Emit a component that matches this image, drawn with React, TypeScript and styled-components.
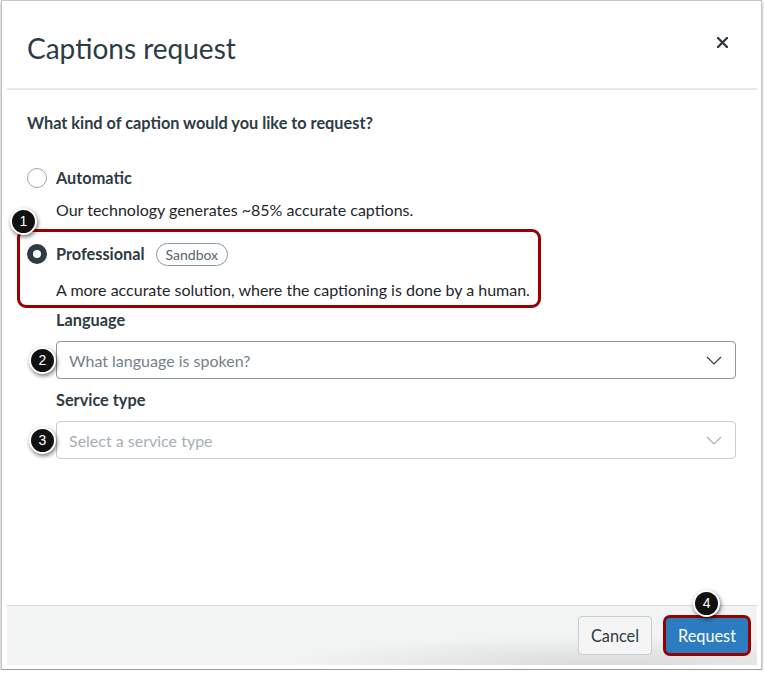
import styled, { createGlobalStyle } from "styled-components";

const GlobalStyle = createGlobalStyle`
  html, body {
    margin: 0;
    padding: 0;
    background: #ffffff;
  }
  body {
    font-family: Lato, "Liberation Sans", sans-serif;
    color: #2d3b45;
  }
`;

const Frame = styled.div`
  box-sizing: border-box;
  width: 761px;
  height: 670px;
  margin-left: 1px;
  border: 1px solid #c4c4c4;
  border-bottom-color: #9a9a9a;
  box-shadow: 0 2px 3px rgba(0, 0, 0, 0.35);
  padding: 0 4px 4px 5px;
  display: flex;
`;

const Dialog = styled.div`
  flex: 1;
  display: flex;
  flex-direction: column;
  background: #ffffff;
`;

const Header = styled.header`
  height: 87px;
  border-bottom: 2px solid #e6e8ea;
  display: flex;
  align-items: center;
  justify-content: space-between;
  padding: 0 28px 0 20px;
  flex-shrink: 0;
`;

const Title = styled.h1`
  margin: 7px 0 0;
  font-size: 28px;
  font-weight: 400;
  line-height: 32px;
  color: #2d3b45;
`;

const CloseButton = styled.button`
  border: none;
  background: none;
  padding: 0;
  margin-bottom: 4px;
  width: 14px;
  height: 14px;
  display: flex;
  align-items: center;
  justify-content: center;
  cursor: pointer;
`;

const Body = styled.main`
  flex: 1;
  display: flex;
  flex-direction: column;
  align-items: flex-start;
  padding: 21px 21px 0 20px;
  font-size: 16px;
`;

const Question = styled.div`
  font-size: 16.3px;
  font-weight: 700;
  line-height: 24px;
  margin-bottom: 31px;
`;

const Option = styled.div`
  display: flex;
  flex-direction: column;
`;

const OptionRow = styled.label`
  display: flex;
  align-items: center;
  height: 24px;
  font-size: 16.3px;
  font-weight: 700;
  line-height: 24px;
`;

const Radio = styled.span<{ $checked?: boolean }>`
  box-sizing: border-box;
  width: 20px;
  height: 20px;
  border-radius: 50%;
  margin-right: 9px;
  background: #ffffff;
  border: ${({ $checked }) =>
    $checked ? "6px solid #2d3b45" : "1px solid #9ea6ad"};
`;

const Description = styled.div<{ $gap: number }>`
  margin: ${({ $gap }) => $gap}px 0 0 29px;
  line-height: 24px;
  white-space: nowrap;
  color: #1f262b;
`;

const Highlight = styled.div`
  position: relative;
  box-sizing: border-box;
  width: 524px;
  margin: 7px 0 0 -10px;
  padding: 10px 9px 3px 7px;
  border: 3px solid #990000;
  border-radius: 9px;
`;

const Pill = styled.span`
  box-sizing: border-box;
  height: 23px;
  margin-left: 11px;
  padding: 0 9px;
  border: 1px solid #8b969e;
  border-radius: 12px;
  font-size: 14px;
  font-weight: 400;
  line-height: 21px;
  color: #556572;
`;

const Step = styled.span`
  position: absolute;
  box-sizing: border-box;
  width: 27px;
  height: 27px;
  border-radius: 50%;
  background: #111111;
  border: 2px solid #ffffff;
  box-shadow: 1px 2px 4px rgba(0, 0, 0, 0.55);
  color: #ffffff;
  font-family: "Liberation Sans", Arial, sans-serif;
  font-size: 14px;
  font-weight: 400;
  line-height: 23px;
  text-align: center;
  z-index: 2;
`;

const FirstStep = styled(Step)`
  left: -10px;
  top: -24px;
`;

const FieldStep = styled(Step)`
  left: -28px;
  top: 5px;
`;

const FieldLabel = styled.div<{ $gap: number }>`
  margin: ${({ $gap }) => $gap}px 0 0 29px;
  font-size: 16.3px;
  font-weight: 700;
  line-height: 24px;
`;

const Select = styled.div<{ $disabled?: boolean }>`
  position: relative;
  box-sizing: border-box;
  align-self: stretch;
  height: 38px;
  margin: 9px 0 0 29px;
  padding: 0 13px 0 12px;
  border: 1px solid ${({ $disabled }) => ($disabled ? "#c7cdd1" : "#8b969e")};
  border-radius: 4px;
  display: flex;
  align-items: center;
  justify-content: space-between;
  color: ${({ $disabled }) => ($disabled ? "#a5afb5" : "#73818c")};
`;

const Footer = styled.footer`
  box-sizing: border-box;
  height: 60px;
  flex-shrink: 0;
  border-top: 1px solid #d7dbde;
  background: radial-gradient(
      ellipse 320px 30px at 80% 100%,
      rgba(0, 0, 0, 0.1),
      rgba(0, 0, 0, 0) 100%
    ),
    #f2f3f3;
  display: flex;
  align-items: center;
  justify-content: flex-end;
  gap: 11px;
  padding: 0 6px 0 0;
`;

const CancelButton = styled.button`
  box-sizing: border-box;
  height: 39px;
  padding: 0 12px;
  border: 1px solid #c7cdd1;
  border-radius: 4px;
  background: #f5f5f5;
  font-family: Lato, "Liberation Sans", sans-serif;
  font-size: 16.3px;
  color: #2d3b45;
`;

const RequestWrap = styled.div`
  position: relative;
  display: flex;
`;

const RequestButton = styled.button`
  box-sizing: border-box;
  height: 41px;
  padding: 0 12px;
  border: 3px solid #990000;
  border-radius: 7px;
  background: #2c7cc0;
  font-family: Lato, "Liberation Sans", sans-serif;
  font-size: 16.3px;
  color: #ffffff;
`;

const RequestStep = styled(Step)`
  left: 30px;
  top: -25px;
`;

const Chevron = ({ color }: { color: string }) => (
  <svg width="16" height="9" viewBox="0 0 16 9" fill="none">
    <path d="M1 1l7 7 7-7" stroke={color} strokeWidth="1.2" />
  </svg>
);

export default function App() {
  return (
    <>
      <GlobalStyle />
      <Frame>
        <Dialog>
          <Header>
            <Title>Captions request</Title>
            <CloseButton aria-label="Close">
              <svg width="11" height="11" viewBox="0 0 11 11">
                <path
                  d="M1 1l9 9M10 1l-9 9"
                  stroke="#2d3b45"
                  strokeWidth="2.4"
                  strokeLinecap="round"
                />
              </svg>
            </CloseButton>
          </Header>

          <Body>
            <Question>What kind of caption would you like to request?</Question>

            <Option>
              <OptionRow>
                <Radio />
                Automatic
              </OptionRow>
              <Description $gap={8}>
                Our technology generates ~85% accurate captions.
              </Description>
            </Option>

            <Highlight>
              <FirstStep>1</FirstStep>
              <Option>
                <OptionRow>
                  <Radio $checked />
                  Professional
                  <Pill>Sandbox</Pill>
                </OptionRow>
                <Description $gap={12}>
                  A more accurate solution, where the captioning is done by a
                  human.
                </Description>
              </Option>
            </Highlight>

            <FieldLabel $gap={0}>Language</FieldLabel>
            <Select>
              <FieldStep>2</FieldStep>
              What language is spoken?
              <Chevron color="#2d3b45" />
            </Select>

            <FieldLabel $gap={9}>Service type</FieldLabel>
            <Select $disabled>
              <FieldStep>3</FieldStep>
              Select a service type
              <Chevron color="#a5afb5" />
            </Select>
          </Body>

          <Footer>
            <CancelButton>Cancel</CancelButton>
            <RequestWrap>
              <RequestStep>4</RequestStep>
              <RequestButton>Request</RequestButton>
            </RequestWrap>
          </Footer>
        </Dialog>
      </Frame>
    </>
  );
}
